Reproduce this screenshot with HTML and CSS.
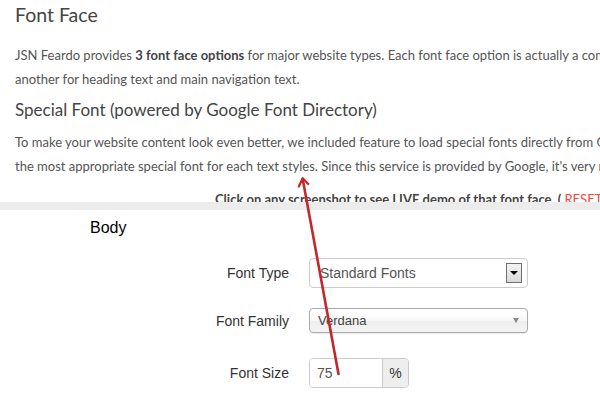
FILE: index.html
```html
<!DOCTYPE html>
<html>
<head>
<meta charset="utf-8">
<title>Font Face</title>
<link rel="stylesheet" href="styles.css">
</head>
<body>
<div class="page">
  <section class="doc">
    <h1 class="doc-title">Font Face</h1>
    <p class="doc-text">JSN Feardo provides <strong>3 font face options</strong> for major website types. Each font face option is actually a combination of two fonts: one for body text and<br>another for heading text and main navigation text.</p>
    <h2 class="doc-subtitle">Special Font (powered by Google Font Directory)</h2>
    <p class="doc-text">To make your website content look even better, we included feature to load special fonts directly from Google Font Directory. You can choose<br>the most appropriate special font for each text styles. Since this service is provided by Google, it's very reliable and fast.</p>
    <p class="doc-note">Click on any screenshot to see LIVE demo of that font face. ( <span class="reset">RESET</span> )</p>
  </section>
  <section class="panel">
    <div class="panel-title">Body</div>
    <div class="form">
      <div class="row row-type">
        <span class="label">Font Type</span>
        <div class="select">
          <span class="select-text">Standard Fonts</span>
          <span class="select-btn"><span class="tri-black"></span></span>
        </div>
      </div>
      <div class="row row-family">
        <span class="label">Font Family</span>
        <div class="chosen">
          <span class="chosen-text">Verdana</span>
          <span class="tri-gray"></span>
        </div>
      </div>
      <div class="row row-size">
        <span class="label">Font Size</span>
        <div class="input-group">
          <span class="input-value">75</span>
          <span class="input-addon">%</span>
        </div>
      </div>
    </div>
  </section>
  <svg class="arrow" width="600" height="400" viewBox="0 0 600 400">
    <line x1="338.5" y1="374" x2="302.7" y2="179" stroke="#c1272d" stroke-width="2.6" stroke-linecap="round"/>
    <polyline points="298.8,186.5 302.7,178.2 308.3,184" fill="none" stroke="#c1272d" stroke-width="2.2" stroke-linecap="round" stroke-linejoin="round"/>
  </svg>
</div>
</body>
</html>
```
FILE: styles.css
```css
html, body {
  margin: 0;
  padding: 0;
  background: #fff;
  overflow: hidden;
}

.page {
  position: relative;
  width: 600px;
  height: 400px;
  overflow: hidden;
}

.doc {
  height: 202px;
  overflow: hidden;
  box-sizing: border-box;
  padding-left: 15px;
  font-family: Lato, "Open Sans", sans-serif;
  color: #555;
  white-space: nowrap;
}

.doc-title {
  margin: 0;
  font-size: 19.5px;
  font-weight: 400;
  line-height: 30px;
  color: #444;
}

.doc-text {
  margin: 13px 0 0;
  font-size: 13px;
  line-height: 24px;
}

.doc-text strong {
  font-weight: 700;
  color: #444;
}

.doc-subtitle {
  margin: 6px 0 0;
  font-size: 17px;
  font-weight: 400;
  line-height: 26px;
  color: #444;
}

.doc-subtitle + .doc-text {
  margin-top: 7px;
}

.doc-note {
  margin: 9px 0 0 200px;
  font-size: 13px;
  font-weight: 700;
  line-height: 24px;
  color: #444;
}

.reset {
  color: #ee4b3e;
  font-weight: 400;
}

.panel {
  border-top: 8px solid #ececec;
  padding: 9px 0 0 90px;
  font-family: "Liberation Sans", Arial, sans-serif;
}

.panel-title {
  font-size: 16px;
  line-height: 18px;
  color: #000;
}

.form {
  margin-top: 21px;
  display: flex;
  flex-direction: column;
}

.row {
  display: flex;
  align-items: center;
  gap: 20px;
  height: 30px;
}

.row-family {
  margin-top: 20px;
  height: 25px;
}

.row-size {
  margin-top: 25px;
}

.label {
  width: 199px;
  text-align: right;
  font-size: 14px;
  color: #333;
}

.select {
  box-sizing: border-box;
  width: 219px;
  height: 30px;
  border: 1px solid #ccc;
  border-radius: 4px;
  background: #fff;
  display: flex;
  align-items: center;
  justify-content: space-between;
  padding: 0 5px 0 10px;
}

.select-text {
  font-size: 14px;
  color: #555;
}

.select-btn {
  box-sizing: border-box;
  width: 16px;
  height: 20px;
  border: 1px solid #6e6e6e;
  background: linear-gradient(#f4f4f4, #d9d9d9);
  display: flex;
  align-items: center;
  justify-content: center;
}

.tri-black {
  width: 0;
  height: 0;
  border-left: 4px solid transparent;
  border-right: 4px solid transparent;
  border-top: 4px solid #000;
}

.chosen {
  box-sizing: border-box;
  width: 219px;
  height: 25px;
  border: 1px solid #aaa;
  border-radius: 4px;
  background: linear-gradient(#fff 20%, #f6f6f6 50%, #eee 52%, #f4f4f4 100%);
  box-shadow: 0 1px 1px rgba(0, 0, 0, 0.08);
  display: flex;
  align-items: center;
  justify-content: space-between;
  padding: 0 8px 0 8px;
}

.chosen-text {
  font-size: 13px;
  color: #444;
}

.tri-gray {
  width: 0;
  height: 0;
  border-left: 3px solid transparent;
  border-right: 3px solid transparent;
  border-top: 5px solid #8a8a8a;
}

.input-group {
  box-sizing: border-box;
  width: 100px;
  height: 30px;
  border: 1px solid #ccc;
  border-radius: 4px;
  overflow: hidden;
  display: flex;
}

.input-value {
  width: 72px;
  box-sizing: border-box;
  padding-left: 7px;
  display: flex;
  align-items: center;
  font-size: 14px;
  color: #555;
  background: #fff;
}

.input-addon {
  flex: 1;
  border-left: 1px solid #ccc;
  background: #eee;
  display: flex;
  align-items: center;
  justify-content: center;
  font-size: 14px;
  color: #333;
}

.arrow {
  position: absolute;
  top: 0;
  left: 0;
  pointer-events: none;
}
```
